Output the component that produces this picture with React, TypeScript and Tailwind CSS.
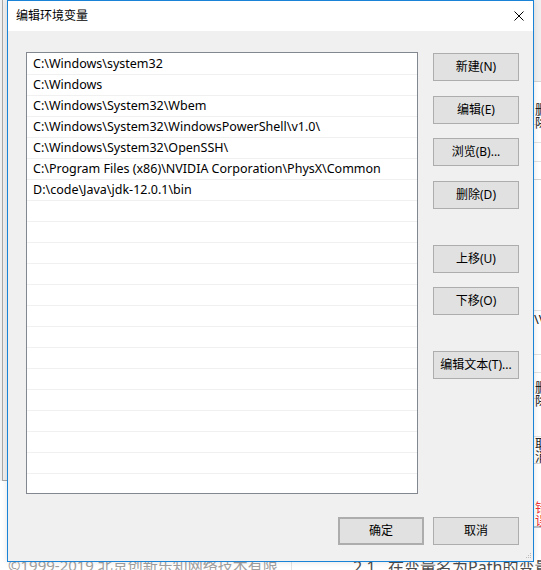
const paths = [
  "C:\\Windows\\system32",
  "C:\\Windows",
  "C:\\Windows\\System32\\Wbem",
  "C:\\Windows\\System32\\WindowsPowerShell\\v1.0\\",
  "C:\\Windows\\System32\\OpenSSH\\",
  "C:\\Program Files (x86)\\NVIDIA Corporation\\PhysX\\Common",
  "D:\\code\\Java\\jdk-12.0.1\\bin",
];

const rows = [...paths, ...Array(14).fill("")];

function Btn({ label, className = "" }: { label: string; className?: string }) {
  return (
    <button
      className={
        "w-[86px] h-[28px] shrink-0 bg-[#e1e1e1] border border-[#adadad] text-[12px] text-black flex items-center justify-center " +
        className
      }
    >
      {label}
    </button>
  );
}

export default function App() {
  return (
    <div className="relative w-[541px] h-[570px] overflow-hidden bg-white font-['Noto_Sans','Noto_Sans_CJK_SC',sans-serif]">
      {/* window behind, left edge */}
      <div className="absolute left-0 top-0 w-[7px] h-[481px] bg-[#f0f0f0]">
        <div className="ml-[2px] h-full w-[5px] border-l border-b border-[#a8a8a8]" />
      </div>

      {/* page behind, bottom */}
      <div className="absolute left-[8px] top-[558px] text-[15px] leading-none text-[#a0a0a0] whitespace-nowrap">
        ©1999-2019 北京创新乐知网络技术有限
      </div>
      <div className="absolute left-[291px] top-[548px] w-[1px] h-[22px] bg-[#e4e4e4]" />
      <div className="absolute left-[353px] top-[559px] text-[16px] leading-none text-[#4d4d4d] whitespace-nowrap">
        2.1&nbsp;&nbsp;&nbsp;在变量名为Path的变量
      </div>

      {/* page behind, right edge */}
      <div className="absolute left-[533px] top-0 w-[8px] h-[570px] overflow-hidden text-[13px] leading-none text-[#222]">
        <div className="h-[82px] bg-[#f0f0f0] border-b border-[#d5d5d5]" />
        <div className="h-[43px] border-b border-[#d5d5d5] pt-[21px] pl-[2px]">删除</div>
        <div className="h-[18px] border-b border-[#e2e2e2]" />
        <div className="h-[19px] border-b border-[#e2e2e2]" />
        <div className="h-[18px] border-b border-[#d5d5d5]" />
        <div className="h-[131px] border-b border-[#e2e2e2]" />
        <div className="h-[44px] border-b border-[#e2e2e2] pt-[2px] pl-[1px]">\V</div>
        <div className="h-[18px] border-b border-[#e2e2e2]" />
        <div className="h-[26px] border-b border-[#d5d5d5] pt-[8px] pl-[2px]">删除</div>
        <div className="h-[38px] border-b border-[#e2e2e2]" />
        <div className="h-[27px] border-b border-[#d5d5d5] pl-[2px]">取消</div>
        <div className="h-[64px] border-b-2 border-[#b8c4d0] pt-[37px] text-[#e33] pl-[2px]">错误</div>
      </div>

      {/* dialog */}
      <div className="absolute left-[7px] top-0 w-[527px] h-[562px] border border-[#1883d7] bg-[#f0f0f0] flex flex-col shadow-[0_0_6px_rgba(0,0,0,0.12)]">
        <div className="h-[30px] shrink-0 bg-white flex items-center justify-between pl-[8px] pr-[9px]">
          <span className="text-[12px] text-black">编辑环境变量</span>
          <svg width="10" height="10" viewBox="0 0 10 10">
            <path d="M0.5 0.5 L9.5 9.5 M9.5 0.5 L0.5 9.5" stroke="#000" strokeWidth="1" />
          </svg>
        </div>

        <div className="flex pt-[21px] pl-[18px] pr-[14px] gap-[15px]">
          <div className="w-[392px] h-[442px] shrink-0 border border-[#828790] bg-white pt-[1px] overflow-hidden">
            {rows.map((p, i) => (
              <div
                key={i}
                className="h-[21px] border-b border-[#f0f0f0] pl-[6px] pt-[1px] flex items-center text-[12.5px] text-black whitespace-nowrap"
              >
                {p}
              </div>
            ))}
          </div>
          <div className="flex flex-col pt-[1px]">
            <Btn label="新建(N)" />
            <Btn label="编辑(E)" className="mt-[15px]" />
            <Btn label="浏览(B)..." className="mt-[14px]" />
            <Btn label="删除(D)" className="mt-[15px]" />
            <Btn label="上移(U)" className="mt-[36px]" />
            <Btn label="下移(O)" className="mt-[14px]" />
            <Btn label="编辑文本(T)..." className="mt-[36px]" />
          </div>
        </div>

        <div className="flex justify-end gap-[9px] pr-[14px] mt-[23px]">
          <Btn label="确定" className="border-2 border-[#0078d7]" />
          <Btn label="取消" />
        </div>

        <div className="flex-1 flex justify-end items-end pr-[1px] pb-[2px]">
          <svg width="6" height="6" viewBox="0 0 6 6">
            <rect x="4" y="0" width="1" height="1" fill="#bcbcbc" />
            <rect x="2" y="2" width="1" height="1" fill="#bcbcbc" />
            <rect x="4" y="2" width="1" height="1" fill="#bcbcbc" />
            <rect x="0" y="4" width="1" height="1" fill="#bcbcbc" />
            <rect x="2" y="4" width="1" height="1" fill="#bcbcbc" />
            <rect x="4" y="4" width="1" height="1" fill="#bcbcbc" />
          </svg>
        </div>
      </div>
    </div>
  );
}
